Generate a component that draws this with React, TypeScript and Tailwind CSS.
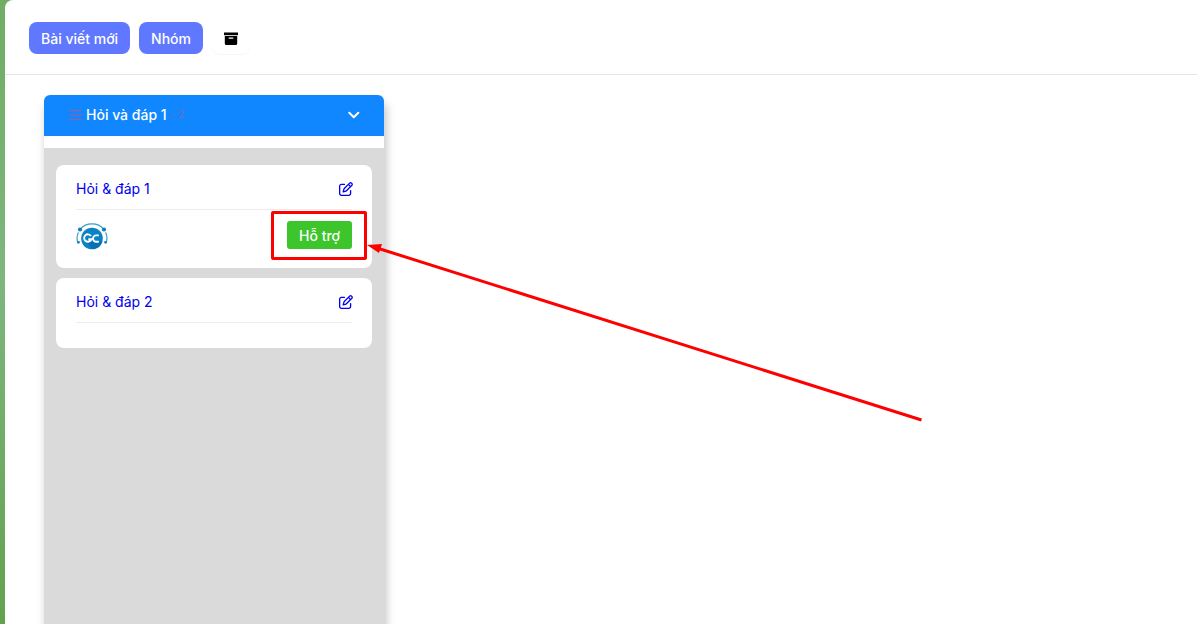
import { FaRegPenToSquare } from "react-icons/fa6";

type Post = {
  id: number;
  title: string;
  supported: boolean;
};

const POSTS: Post[] = [
  { id: 1, title: "Hỏi & đáp 1", supported: true },
  { id: 2, title: "Hỏi & đáp 2", supported: false }
];

function BarsIcon() {
  return (
    <svg aria-hidden="true" className="h-3 w-4 text-[#7a68b8]" viewBox="0 0 16 12" fill="none">
      <path d="M1 1.500h12M2 6h13M1 10.500h12" stroke="currentColor" strokeWidth="1.500" />
    </svg>
  );
}

function ArchiveIcon() {
  return (
    <svg aria-hidden="true" className="size-[14px]" viewBox="0 0 14 14" fill="currentColor">
      <path d="M0 0.500h14v2.700H0z" />
      <path
        fillRule="evenodd"
        d="M.8 4h12.400v7.500a1.600 1.600 0 0 1-1.600 1.600H2.400A1.600 1.600 0 0 1 .8 11.500zM4.700 5.600v1.100h4.600V5.600z"
      />
    </svg>
  );
}

function ChevronIcon() {
  return (
    <svg aria-hidden="true" className="size-3" viewBox="0 0 12 12" fill="none">
      <path
        d="M1.300 3.800L5.800 8.200l4.500-4.400"
        stroke="currentColor"
        strokeWidth="2"
        strokeLinecap="round"
        strokeLinejoin="round"
      />
    </svg>
  );
}

function SupportLogo() {
  return (
    <svg role="img" aria-label="GC" className="size-8" viewBox="0 -2 32 32">
      <path
        d="M2.300 20.500C.8 17.500.8 13 2.400 9.500M4.500 6C7 2.800 11 .8 16 .8S25 2.800 27.500 6M29.600 9.500c1.600 3.500 1.600 8 .1 11"
        fill="none"
        stroke="#3a9bca"
        strokeWidth="1.200"
      />
      <circle cx="4" cy="6.500" r="2.100" fill="#0b7fc0" />
      <circle cx="28" cy="6.500" r="2.100" fill="#0b7fc0" />
      <circle cx="2.500" cy="19.300" r="1.300" fill="#0b7fc0" />
      <circle cx="29.500" cy="19.300" r="1.300" fill="#0b7fc0" />
      <circle cx="16" cy="15.500" r="10.800" fill="#0a83c5" />
      <path d="M22 18.500l4.200 0a10.800 10.800 0 0 1-10 7.600l-5-6.800z" fill="#0870b0" />
      <g fill="none" stroke="#fff" strokeWidth="1.900">
        <path d="M15 13.100a3.700 3.700 0 1 0 .3 3.200h-3" />
        <path d="M22.800 12.400h-2.600a3.200 3.200 0 0 0 0 6.400h2.600" />
      </g>
    </svg>
  );
}

// Frame and arrow pointing at the support button
function SupportHint() {
  return (
    <div className="pointer-events-none absolute -top-[10px] -right-[15px] z-10 h-[49px] w-24 rounded-xs border-3 border-[#fe0000]">
      <svg
        aria-hidden="true"
        className="absolute top-7 left-[93px] h-[184px] w-[560px] text-[#fe0000]"
        viewBox="0 0 560 184"
      >
        <path d="M10 6L554.500 178" stroke="currentColor" strokeWidth="3" />
        <path d="M0 3L15 2L12 11z" fill="currentColor" />
      </svg>
    </div>
  );
}

function PostCard({ post }: { post: Post }) {
  return (
    <article className="rounded-lg bg-white px-5">
      <div className="flex items-center justify-between border-b border-[#ececec] pt-[14px] pb-[10px]">
        <a href={`#post-${post.id}`} className="text-sm text-[#0000ee]">
          {post.title}
        </a>
        <button type="button" aria-label={`Sửa ${post.title}`} className="-mr-px text-[#0000ee]">
          <FaRegPenToSquare className="size-[14px]" />
        </button>
      </div>
      {post.supported ? (
        <div className="flex items-start justify-between pt-[11px] pb-[15px]">
          <SupportLogo />
          <div className="relative">
            <button
              type="button"
              className="h-7 rounded-[3px] bg-[#3cc62b] px-3 pt-0.5 text-sm font-medium text-white"
            >
              Hỗ trợ
            </button>
            <SupportHint />
          </div>
        </div>
      ) : (
        <div className="h-[25px]" />
      )}
    </article>
  );
}

export default function App() {
  return (
    <div className="flex h-screen overflow-hidden bg-linear-to-b from-[#71ad63] from-0% via-[#7eb67d] via-45% to-[#63a24d] font-['Inter','Noto_Sans',sans-serif] pl-[5px]">
      <main className="flex min-w-0 flex-1 flex-col rounded-tl-lg bg-white">
        <header className="flex items-center gap-[9px] border-b border-[#e5e5e5] px-6 pt-[22px] pb-5">
          <button type="button" className="h-8 rounded-lg bg-[#5f78ff] px-3 pt-0.5 text-sm font-medium text-white">
            Bài viết mới
          </button>
          <button type="button" className="h-8 rounded-lg bg-[#5f78ff] px-3 pt-0.5 text-sm font-medium text-white">
            Nhóm
          </button>
          <button
            type="button"
            aria-label="Lưu trữ"
            className="flex h-8 items-center rounded-lg bg-white px-3 pt-0.5 text-black shadow-[0_1px_1px_rgba(0,0,0,0.04)]"
          >
            <ArchiveIcon />
          </button>
        </header>

        <div className="flex flex-1 overflow-hidden pl-[39px] pt-5">
          <section className="flex w-[340px] flex-col rounded-t-md bg-white shadow-[2px_8px_10px_rgba(0,0,0,0.25)]">
            <div className="flex h-[41px] items-center justify-between rounded-t-md bg-[#1187ff] px-6 pb-0.5">
              <h2 className="flex items-center gap-0.5 text-sm font-medium text-white">
                <BarsIcon />
                <span>Hỏi và đáp 1</span>
                <span className="pl-0.5 text-[10px] font-normal text-[#7a68b8]">- 2</span>
              </h2>
              <button type="button" aria-label="Thu gọn" className="text-white">
                <ChevronIcon />
              </button>
            </div>
            <div className="mt-3 flex flex-1 flex-col gap-[10px] bg-[#dadada] px-3 pt-[17px]">
              {POSTS.map((post) => (
                <PostCard key={post.id} post={post} />
              ))}
            </div>
          </section>
        </div>
      </main>
    </div>
  );
}
